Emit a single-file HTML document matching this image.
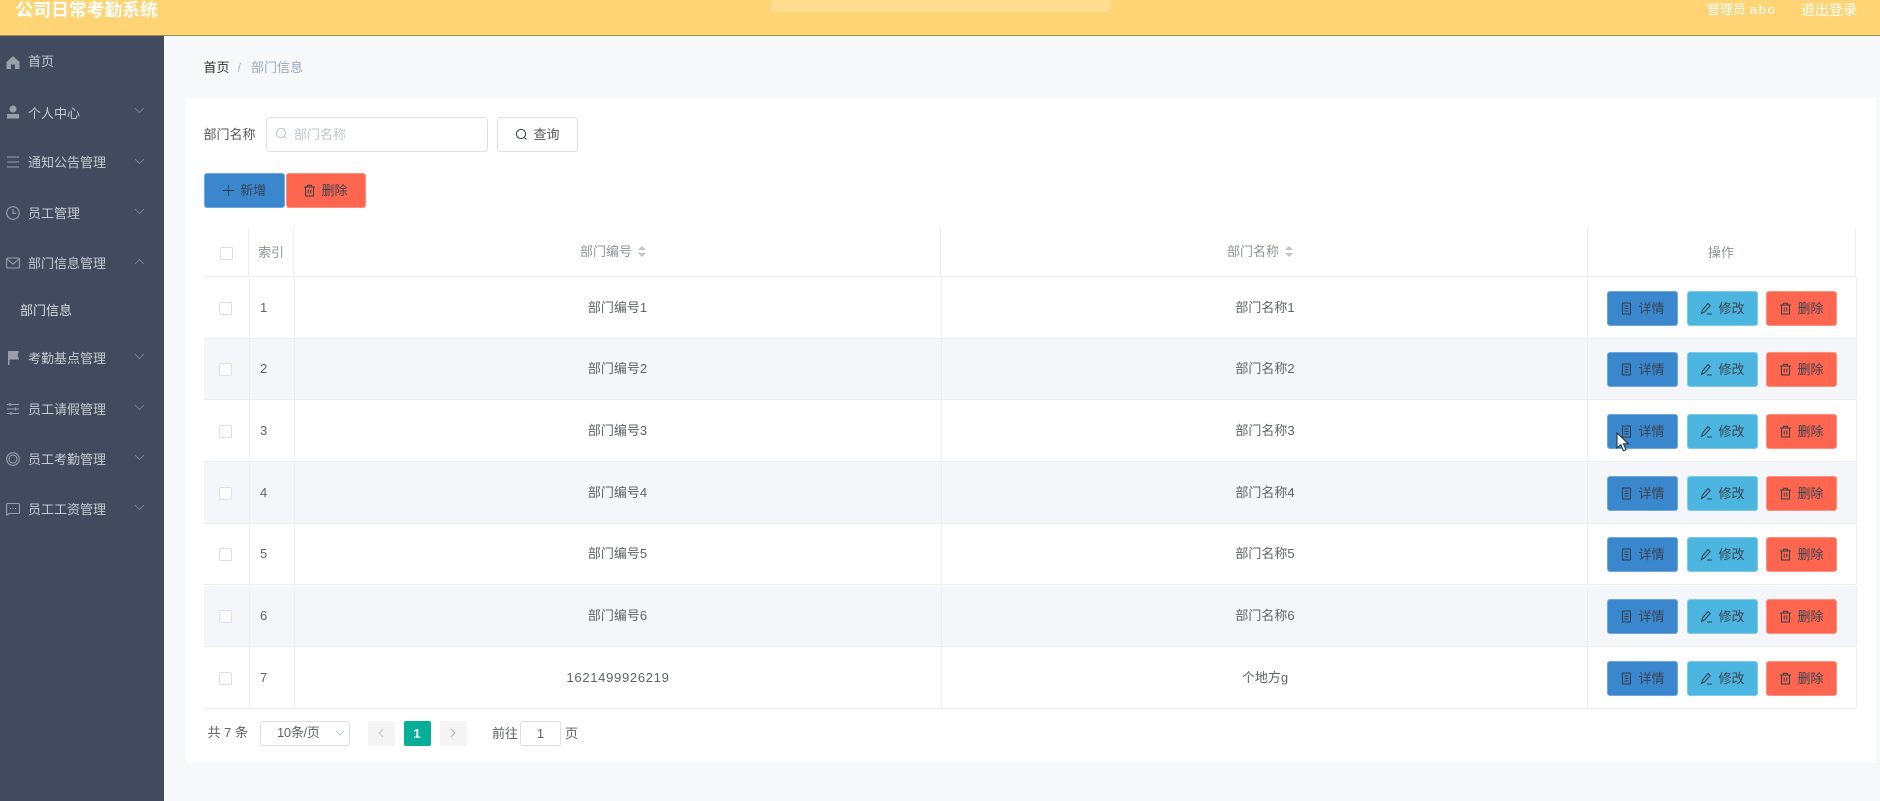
<!DOCTYPE html>
<html lang="zh-CN"><head><meta charset="utf-8"><title>公司日常考勤系统</title>
<style>
*{box-sizing:border-box}
html,body{margin:0;padding:0}
html{background:#f7f8fa}
body{width:1880px;height:801px;position:relative;overflow:hidden;background:#f7f8fa;font:13px/18px "Liberation Sans","Noto Sans CJK SC",sans-serif;color:#606266;filter:blur(.3px)}
.a{position:absolute}
.t{position:absolute;white-space:nowrap;line-height:18px}
#hd{left:0;top:0;width:1880px;height:36px;background:#ffd474;border-bottom:1px solid #a08a55}
#sb{left:0;top:36px;width:163.5px;height:765px;background:#414b5d}
.m{position:absolute;left:28px;color:#c6c9cf;white-space:nowrap;line-height:18px;margin-top:.5px}
.ic{position:absolute;left:6px;width:14px;height:14px;fill:none;stroke:#9a9fa8;stroke-width:1.1}
.ch{position:absolute;left:134px;width:11px;height:7px;fill:none;stroke:#777f8c;stroke-width:1;margin-top:1px}
#card{left:185px;top:98px;width:1691px;height:665px;background:#fff}
.btn{position:absolute;height:35px;border-radius:3px;color:#3b4350;text-align:center;line-height:34px;white-space:nowrap;border:1px solid rgba(255,255,255,.28)}
.btn svg{width:13px;height:13px;fill:none;stroke:#333c48;stroke-width:1;vertical-align:-2px;margin-right:5px}
.b{background:#3a87cd}.c{background:#4db6e0}.r{background:#ff6650}
.row{position:absolute;left:204px;width:1652px;height:61.7px;border-bottom:1px solid #ebeef5;background:#fff}
.row.e{background:#f4f6fa}
.vl{position:absolute;top:0;bottom:0;width:1px;background:#ebeef5}
.cb{position:absolute;width:13px;height:13px;left:15px;top:24.5px;border:1px solid #dcdfe6;border-radius:2px;background:#fff}
.cl{position:absolute;top:21.5px;text-align:center;line-height:18px;color:#5f6266}
.d{letter-spacing:.7px}
.h{color:#909399;font-weight:400}
.sort{position:absolute;width:0;height:0;border-left:4.5px solid transparent;border-right:4.5px solid transparent}
.v1{left:44.5px}.v2{left:89.5px}.v3{left:737px}.v4{left:1383.2px}.v5{left:1651.5px}
.bt{top:13.5px;width:71px}
</style></head><body>
<svg width="0" height="0" style="position:absolute"><defs>
<symbol id="doc" viewBox="0 0 13 13"><rect x="2.5" y="1" width="8" height="11"/><path d="M4.5 4h4M4.5 6.500h4M4.500 9h4"/></symbol>
<symbol id="pen" viewBox="0 0 13 13"><path d="M1.500 11.500l1-3.500 5.500-6.500 2.200 2-5.600 6.300zM7 12h5"/></symbol>
<symbol id="bin" viewBox="0 0 13 13"><path d="M1 3h11M4.500 3V1.200h4V3M2.500 3v9h8V3M5.200 5.500v4M7.800 5.500v4"/></symbol>
<symbol id="srch" viewBox="0 0 13 13"><circle cx="6" cy="6" r="4.600"/><path d="M9.500 9.500l2 2"/></symbol>
</defs></svg>

<div class="a" id="hd">
<div class="t" style="left:15.500px;top:0;font-size:17.800px;font-weight:700;color:#fff;line-height:20px">公司日常考勤系统</div>
<div class="a" style="left:771px;top:0;width:340px;height:12px;background:#ffdc8e;border-radius:0 0 3px 3px"></div>
<div class="t" style="left:1707px;top:1px;color:#fff">管理员 <span style="letter-spacing:1.800px">abo</span></div>
<div class="t" style="left:1801px;top:1px;color:#fff;font-size:14px">退出登录</div>
</div>

<div class="a" id="sb"></div>
<div class="a" style="left:0;top:0;width:164px;height:801px">
<svg class="ic" style="top:55px;fill:#9a9fa8;stroke:none" viewBox="0 0 14 14"><path d="M7 1L.5 7v7h4.500V9.500h4V14h4.500V7z"/></svg>
<div class="m" style="top:52px">首页</div>
<svg class="ic" style="top:105px;fill:#9a9fa8;stroke:none" viewBox="0 0 14 14"><circle cx="7" cy="4" r="3.500"/><path d="M1 9h12v4.500H1z"/></svg>
<div class="m" style="top:104px">个人中心</div><svg class="ch" style="top:106px" viewBox="0 0 11 7"><path d="M1 1l4.500 4.500L10 1"/></svg>
<svg class="ic" style="top:155px" viewBox="0 0 14 14"><path d="M1 2h12M1 7h12M1 12h12"/></svg>
<div class="m" style="top:153px">通知公告管理</div><svg class="ch" style="top:157px" viewBox="0 0 11 7"><path d="M1 1l4.500 4.500L10 1"/></svg>
<svg class="ic" style="top:206px" viewBox="0 0 14 14"><circle cx="7" cy="7" r="6.300"/><path d="M7 3v4.300h3.500"/></svg>
<div class="m" style="top:204px">员工管理</div><svg class="ch" style="top:207px" viewBox="0 0 11 7"><path d="M1 1l4.500 4.500L10 1"/></svg>
<svg class="ic" style="top:256px" viewBox="0 0 14 14"><rect x=".6" y="2" width="12.800" height="10" rx="1"/><path d="M1 3l6 5 6-5"/></svg>
<div class="m" style="top:254px">部门信息管理</div><svg class="ch" style="top:257px" viewBox="0 0 11 7"><path d="M1 6l4.500-4.500L10 6"/></svg>
<div class="m" style="left:20px;top:301px;color:#d8dade">部门信息</div>
<svg class="ic" style="top:351px;fill:#9a9fa8;stroke:none" viewBox="0 0 14 14"><path d="M2 0h11l-1.500 4L13 8.500H3.500V14H2z"/></svg>
<div class="m" style="top:349px">考勤基点管理</div><svg class="ch" style="top:352px" viewBox="0 0 11 7"><path d="M1 1l4.500 4.500L10 1"/></svg>
<svg class="ic" style="top:402px" viewBox="0 0 14 14"><path d="M1 2.500h12M1 7h12M1 11.500h12M4 1v3M9.500 5.500v3M5 10v3"/></svg>
<div class="m" style="top:400px">员工请假管理</div><svg class="ch" style="top:403px" viewBox="0 0 11 7"><path d="M1 1l4.500 4.500L10 1"/></svg>
<svg class="ic" style="top:452px" viewBox="0 0 14 14"><circle cx="7" cy="7" r="6.300"/><circle cx="7" cy="7" r="4"/></svg>
<div class="m" style="top:450px">员工考勤管理</div><svg class="ch" style="top:453px" viewBox="0 0 11 7"><path d="M1 1l4.500 4.500L10 1"/></svg>
<svg class="ic" style="top:502px" viewBox="0 0 14 14"><path d="M1.500 1.500h11a1 1 0 0 1 1 1v8a1 1 0 0 1-1 1H3L.6 13V2.500a1 1 0 0 1 1-1zM4 6.500h1M6.500 6.500h1M9 6.500h1"/></svg>
<div class="m" style="top:500px">员工工资管理</div><svg class="ch" style="top:503px" viewBox="0 0 11 7"><path d="M1 1l4.500 4.500L10 1"/></svg>
</div>

<div class="t" style="left:203.500px;top:59px;color:#303133">首页</div>
<div class="t" style="left:237.500px;top:59px;color:#b0b4ba">/</div>
<div class="t" style="left:251px;top:59px;color:#97a8be">部门信息</div>

<div class="a" id="card"></div>

<div class="t" style="left:203.500px;top:126px;color:#555">部门名称</div>
<div class="a" style="left:266px;top:117px;width:222px;height:35px;background:#fff;border:1px solid #dcdfe6;border-radius:4px"></div>
<svg class="a" style="left:275px;top:127px;width:13px;height:13px;fill:none;stroke:#c0c4cc;stroke-width:1" viewBox="0 0 13 13"><use href="#srch"/></svg>
<div class="t" style="left:294px;top:126px;color:#c0c4cc">部门名称</div>
<div class="btn" style="left:497px;top:117px;width:81px;background:#fff;border:1px solid #dcdfe6;color:#555"><svg viewBox="0 0 13 13"><use href="#srch"/></svg>查询</div>
<div class="btn b" style="left:204px;top:172.700px;width:80.500px"><svg viewBox="0 0 13 13"><path d="M6.500 1v11M1 6.500h11"/></svg>新增</div>
<div class="btn r" style="left:285.500px;top:172.700px;width:80px"><svg viewBox="0 0 13 13"><use href="#bin"/></svg>删除</div>

<!-- header -->
<div class="row" style="top:228px;height:49px">
<div class="vl" style="left:44px"></div><div class="vl" style="left:89px"></div><div class="vl" style="left:736px"></div><div class="vl" style="left:1382.500px"></div><div class="vl" style="left:1651px"></div>
<div class="cb" style="left:16px;top:19px"></div>
<div class="cl h" style="left:54px;top:16px">索引</div>
<div class="cl h" style="left:376px;top:15px">部门编号</div>
<div class="sort" style="left:434px;top:18px;border-bottom:4.500px solid #c0c4cc"></div><div class="sort" style="left:434px;top:25px;border-top:4.500px solid #c0c4cc"></div>
<div class="cl h" style="left:1023px;top:15px">部门名称</div>
<div class="sort" style="left:1081px;top:18px;border-bottom:4.500px solid #c0c4cc"></div><div class="sort" style="left:1081px;top:25px;border-top:4.500px solid #c0c4cc"></div>
<div class="cl h" style="left:1504px;top:16px">操作</div>
</div>

<!-- rows -->
<div class="row" style="top:277px"><div class="vl v1"></div><div class="vl v2"></div><div class="vl v3"></div><div class="vl v4"></div><div class="vl v5"></div><div class="cb"></div>
<div class="cl" style="left:56px">1</div><div class="cl" style="left:90.500px;width:646px">部门编号1</div><div class="cl" style="left:738px;width:646px">部门名称1</div>
<div class="btn b bt" style="left:1403px"><svg viewBox="0 0 13 13"><use href="#doc"/></svg>详情</div><div class="btn c bt" style="left:1483px"><svg viewBox="0 0 13 13"><use href="#pen"/></svg>修改</div><div class="btn r bt" style="left:1562px"><svg viewBox="0 0 13 13"><use href="#bin"/></svg>删除</div></div>

<div class="row e" style="top:338.700px"><div class="vl v1"></div><div class="vl v2"></div><div class="vl v3"></div><div class="vl v4"></div><div class="vl v5"></div><div class="cb"></div>
<div class="cl" style="left:56px">2</div><div class="cl" style="left:90.500px;width:646px">部门编号2</div><div class="cl" style="left:738px;width:646px">部门名称2</div>
<div class="btn b bt" style="left:1403px"><svg viewBox="0 0 13 13"><use href="#doc"/></svg>详情</div><div class="btn c bt" style="left:1483px"><svg viewBox="0 0 13 13"><use href="#pen"/></svg>修改</div><div class="btn r bt" style="left:1562px"><svg viewBox="0 0 13 13"><use href="#bin"/></svg>删除</div></div>

<div class="row" style="top:400.400px"><div class="vl v1"></div><div class="vl v2"></div><div class="vl v3"></div><div class="vl v4"></div><div class="vl v5"></div><div class="cb"></div>
<div class="cl" style="left:56px">3</div><div class="cl" style="left:90.500px;width:646px">部门编号3</div><div class="cl" style="left:738px;width:646px">部门名称3</div>
<div class="btn b bt" style="left:1403px"><svg viewBox="0 0 13 13"><use href="#doc"/></svg>详情</div><div class="btn c bt" style="left:1483px"><svg viewBox="0 0 13 13"><use href="#pen"/></svg>修改</div><div class="btn r bt" style="left:1562px"><svg viewBox="0 0 13 13"><use href="#bin"/></svg>删除</div></div>

<div class="row e" style="top:462.100px"><div class="vl v1"></div><div class="vl v2"></div><div class="vl v3"></div><div class="vl v4"></div><div class="vl v5"></div><div class="cb"></div>
<div class="cl" style="left:56px">4</div><div class="cl" style="left:90.500px;width:646px">部门编号4</div><div class="cl" style="left:738px;width:646px">部门名称4</div>
<div class="btn b bt" style="left:1403px"><svg viewBox="0 0 13 13"><use href="#doc"/></svg>详情</div><div class="btn c bt" style="left:1483px"><svg viewBox="0 0 13 13"><use href="#pen"/></svg>修改</div><div class="btn r bt" style="left:1562px"><svg viewBox="0 0 13 13"><use href="#bin"/></svg>删除</div></div>

<div class="row" style="top:523.800px"><div class="vl v1"></div><div class="vl v2"></div><div class="vl v3"></div><div class="vl v4"></div><div class="vl v5"></div><div class="cb"></div>
<div class="cl" style="left:56px">5</div><div class="cl" style="left:90.500px;width:646px">部门编号5</div><div class="cl" style="left:738px;width:646px">部门名称5</div>
<div class="btn b bt" style="left:1403px"><svg viewBox="0 0 13 13"><use href="#doc"/></svg>详情</div><div class="btn c bt" style="left:1483px"><svg viewBox="0 0 13 13"><use href="#pen"/></svg>修改</div><div class="btn r bt" style="left:1562px"><svg viewBox="0 0 13 13"><use href="#bin"/></svg>删除</div></div>

<div class="row e" style="top:585.500px"><div class="vl v1"></div><div class="vl v2"></div><div class="vl v3"></div><div class="vl v4"></div><div class="vl v5"></div><div class="cb"></div>
<div class="cl" style="left:56px">6</div><div class="cl" style="left:90.500px;width:646px">部门编号6</div><div class="cl" style="left:738px;width:646px">部门名称6</div>
<div class="btn b bt" style="left:1403px"><svg viewBox="0 0 13 13"><use href="#doc"/></svg>详情</div><div class="btn c bt" style="left:1483px"><svg viewBox="0 0 13 13"><use href="#pen"/></svg>修改</div><div class="btn r bt" style="left:1562px"><svg viewBox="0 0 13 13"><use href="#bin"/></svg>删除</div></div>

<div class="row" style="top:647.200px"><div class="vl v1"></div><div class="vl v2"></div><div class="vl v3"></div><div class="vl v4"></div><div class="vl v5"></div><div class="cb"></div>
<div class="cl" style="left:56px">7</div><div class="cl d" style="left:91px;width:646px">1621499926219</div><div class="cl" style="left:738px;width:646px">个地方g</div>
<div class="btn b bt" style="left:1403px"><svg viewBox="0 0 13 13"><use href="#doc"/></svg>详情</div><div class="btn c bt" style="left:1483px"><svg viewBox="0 0 13 13"><use href="#pen"/></svg>修改</div><div class="btn r bt" style="left:1562px"><svg viewBox="0 0 13 13"><use href="#bin"/></svg>删除</div></div>

<!-- cursor -->
<svg class="a" style="left:1616px;top:432px;width:14px;height:21px" viewBox="0 0 14 21"><path d="M1 1v15l3.800-3.300 2.600 6 2.600-1.100-2.600-5.800h5z" fill="#fff" stroke="#1d2733" stroke-width="1"/></svg>

<!-- pagination -->
<div class="t" style="left:207.500px;top:724px;color:#606266">共 7 条</div>
<div class="a" style="left:260px;top:720.700px;width:90px;height:25px;border:1px solid #dcdfe6;border-radius:3px;background:#fff"></div>
<div class="t" style="left:277px;top:724px;letter-spacing:-.3px">10条/页</div>
<svg class="a" style="left:335px;top:730px;width:10px;height:6px;fill:none;stroke:#c0c4cc" viewBox="0 0 10 6"><path d="M1 1l4 4 4-4"/></svg>
<div class="a" style="left:368px;top:720.700px;width:27px;height:25px;background:#f4f4f5;border-radius:2px"></div>
<svg class="a" style="left:378px;top:728px;width:6px;height:10px;fill:none;stroke:#c0c4cc" viewBox="0 0 6 10"><path d="M5 1L1 5l4 4"/></svg>
<div class="a" style="left:403.500px;top:720.700px;width:27px;height:25px;background:#04ae97;border-radius:2px;color:#fff;text-align:center;line-height:25px;font-weight:700">1</div>
<div class="a" style="left:439.500px;top:720.700px;width:27px;height:25px;background:#f4f4f5;border-radius:2px"></div>
<svg class="a" style="left:450px;top:728px;width:6px;height:10px;fill:none;stroke:#b0b4ba" viewBox="0 0 6 10"><path d="M1 1l4 4-4 4"/></svg>
<div class="t" style="left:492px;top:725px">前往</div>
<div class="a" style="left:520px;top:720.700px;width:41px;height:25px;border:1px solid #dcdfe6;border-radius:3px;background:#fff;text-align:center;line-height:23px">1</div>
<div class="t" style="left:565px;top:725px">页</div>
</body></html>
